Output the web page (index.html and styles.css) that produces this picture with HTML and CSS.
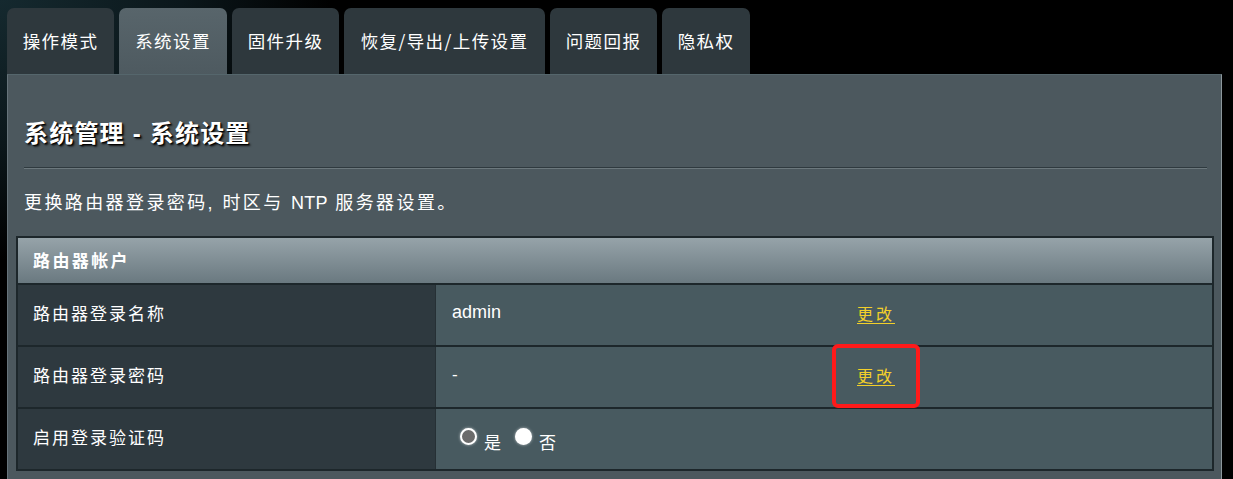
FILE: index.html
```html
<!DOCTYPE html>
<html lang="zh-CN">
<head>
<meta charset="utf-8">
<title>系统管理 - 系统设置</title>
<link rel="stylesheet" href="styles.css">
</head>
<body>
<div class="page">
  <nav class="tabs">
    <div class="tab">操作模式</div>
    <div class="tab tab-active">系统设置</div>
    <div class="tab">固件升级</div>
    <div class="tab tab-wide">恢复/导出/上传设置</div>
    <div class="tab">问题回报</div>
    <div class="tab tab-narrow">隐私权</div>
  </nav>
  <main class="panel">
    <h1 class="title">系统管理 - 系统设置</h1>
    <div class="divider"></div>
    <p class="desc">更换路由器登录密码, 时区与 <span class="latin">NTP</span> 服务器设置。</p>
    <section class="account">
      <div class="account-head">路由器帐户</div>
      <div class="row">
        <div class="label">路由器登录名称</div>
        <div class="cell">
          <span class="value value-bold">admin</span>
          <a class="link" href="#">更改</a>
        </div>
      </div>
      <div class="row">
        <div class="label">路由器登录密码</div>
        <div class="cell">
          <span class="value">-</span>
          <span class="link-wrap">
            <a class="link" href="#">更改</a>
            <span class="highlight"></span>
          </span>
        </div>
      </div>
      <div class="row">
        <div class="label">启用登录验证码</div>
        <div class="cell cell-radio">
          <label class="radio-item"><input class="radio radio-on" type="radio" name="captcha" checked><span class="radio-text">是</span></label>
          <label class="radio-item"><input class="radio" type="radio" name="captcha"><span class="radio-text">否</span></label>
        </div>
      </div>
    </section>
  </main>
</div>
</body>
</html>
```
FILE: styles.css
```css
html, body {
  margin: 0;
  height: 100%;
}
body {
  background: radial-gradient(ellipse 330px 260px at 0 0, #15292f 0%, #0b171b 55%, #000 100%), #000;
  font-family: "Liberation Sans", "Noto Sans CJK SC", sans-serif;
  color: #fff;
  overflow: hidden;
}
.page {
  padding-top: 8px;
}
.tabs {
  display: flex;
  gap: 5px;
  margin-left: 7px;
}
.tab {
  width: 107px;
  height: 66px;
  box-sizing: border-box;
  background: #2e383d;
  border-radius: 7px 7px 0 0;
  font-family: "Noto Sans CJK SC", sans-serif;
  font-size: 17.5px;
  letter-spacing: 1.4px;
  line-height: 66px;
  text-align: center;
  color: #fff;
}
.tab-active {
  width: 108px;
  background: linear-gradient(#58656b, #4e5a60);
}
.tab-wide {
  width: 201px;
}
.tab-narrow {
  width: 88px;
}
.panel {
  display: block;
  margin-left: 7px;
  width: 1215px;
  height: 420px;
  box-sizing: border-box;
  background: #4c585e;
  border-left: 1px solid #66737a;
  border-right: 1px solid #8c979c;
  border-top: 1px solid #55666c;
  padding: 43px 7px 0 8px;
}
.title {
  margin: 0 0 0 8px;
  font-family: "Liberation Sans", "Noto Sans CJK SC", sans-serif;
  font-size: 24px;
  font-weight: bold;
  letter-spacing: 1.2px;
  line-height: 32px;
  color: #fff;
  text-shadow: 1px 1px 1px #000, 2px 2px 2px #1a1a1a;
}
.divider {
  margin: 17px 7px 0 8px;
  height: 1px;
  background: #2f3a3f;
  border-bottom: 1px solid #6c787d;
}
.desc {
  margin: 22px 0 0 8px;
  font-size: 18px;
  letter-spacing: 2.4px;
  line-height: 24px;
  color: #fff;
}
.latin {
  letter-spacing: 0.3px;
}
.account {
  margin-top: 21px;
  border: 2px solid #1d272b;
}
.account-head {
  height: 45px;
  display: flex;
  align-items: center;
  padding-left: 15px;
  padding-bottom: 2px;
  box-sizing: border-box;
  background: linear-gradient(#96a3a9, #6a7980);
  border-bottom: 2px solid #1d272b;
  font-size: 17px;
  font-weight: bold;
  letter-spacing: 2.4px;
  color: #fff;
  height: 47px;
}
.row {
  display: grid;
  grid-template-columns: 418px 1fr;
  height: 60px;
  border-bottom: 2px solid #1d272b;
}
.row:last-child {
  border-bottom: none;
}
.label {
  display: flex;
  align-items: center;
  padding-left: 15px;
  padding-bottom: 5px;
  background: #2e393f;
  border-right: 1px solid #263035;
  font-size: 17px;
  letter-spacing: 2px;
  color: #fff;
}
.cell {
  display: flex;
  align-items: center;
  padding-left: 16px;
  padding-bottom: 5px;
  background: #485a60;
}
.value {
  width: 405px;
  flex: none;
  font-size: 17px;
  color: #fff;
}
.value-bold {
  font-size: 18px;
}
.link-wrap {
  position: relative;
  display: inline-block;
}
.link {
  font-size: 16px;
  letter-spacing: 3px;
  color: #f2cf2a;
  text-decoration: underline;
  text-underline-offset: 3px;
}
.highlight {
  position: absolute;
  left: -25px;
  right: -25px;
  top: 50%;
  height: 64px;
  transform: translateY(-50%);
  margin-top: 1px;
  border: 4px solid #ff1a1a;
  border-radius: 6px;
  box-sizing: border-box;
}
.cell-radio {
  padding-left: 24px;
  padding-bottom: 0;
  gap: 14px;
}
.radio-item {
  display: flex;
  align-items: center;
  gap: 7px;
}
.radio {
  appearance: none;
  -webkit-appearance: none;
  margin: 0;
  width: 17px;
  height: 17px;
  border-radius: 50%;
  background: #fff;
  box-shadow: 0 0 3px rgba(255, 255, 255, 0.6);
  position: relative;
  top: -3px;
}
.radio-on {
  background: #6b6b6b;
  border: 2.5px solid #fff;
  box-sizing: border-box;
}
.radio-text {
  font-family: "Noto Sans CJK SC", sans-serif;
  font-size: 17px;
  color: #fff;
  position: relative;
  top: 2px;
}
```
